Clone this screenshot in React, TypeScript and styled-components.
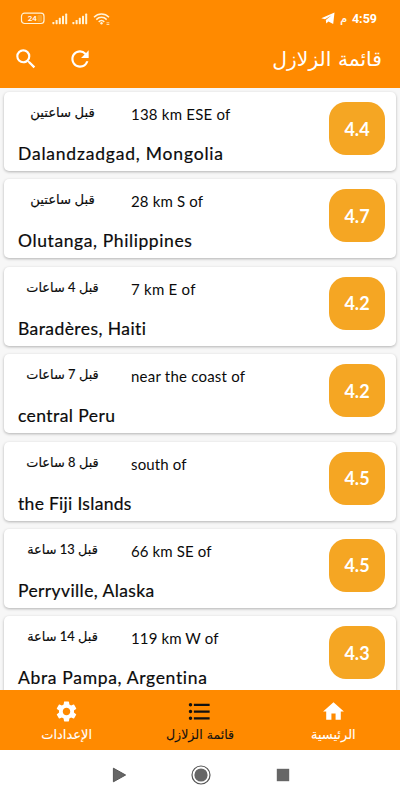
import React from "react";
import styled, { createGlobalStyle } from "styled-components";

const GlobalStyle = createGlobalStyle`
  * { box-sizing: border-box; }
  html, body { margin: 0; padding: 0; background: #fff; }
`;

const latin = `Lato, "Noto Sans", sans-serif`;
const arabic = `Lato, "DejaVu Sans", sans-serif`;

const Screen = styled.div`
  width: 400px;
  height: 800px;
  overflow: hidden;
  display: flex;
  flex-direction: column;
  background: #f7f7f7;
  color: #0b0b0b;
`;

const Header = styled.header`
  height: 88px;
  flex: none;
  background: #ff8a00;
  color: #fff;
  display: flex;
  flex-direction: column;
`;

const StatusBar = styled.div`
  height: 36px;
  padding: 1px 23px 0 20px;
  display: flex;
  align-items: center;
  justify-content: space-between;
`;

const StatusGroup = styled.div<{ $gap: number }>`
  display: flex;
  align-items: center;
  gap: ${(p) => p.$gap}px;
`;

const Clock = styled.span`
  font: 700 12.5px/16px Roboto, "DejaVu Sans", sans-serif;
`;

const Meridiem = styled.span`
  font: 400 11px/16px "DejaVu Sans", sans-serif;
  -webkit-text-stroke: 0.2px #fff;
`;

const AppBar = styled.div`
  height: 46px;
  padding: 0 18px 0 13px;
  display: flex;
  align-items: center;
  justify-content: space-between;
`;

const Actions = styled.div`
  display: flex;
  gap: 28px;
`;

const Title = styled.h1`
  margin: 0;
  font: 400 20.3px/28px "DejaVu Sans", sans-serif;
  white-space: nowrap;
`;

const List = styled.main`
  height: 602px;
  flex: none;
  overflow: hidden;
  padding: 4px 4px 0;
  display: flex;
  flex-direction: column;
  gap: 8.4px;
`;

const Card = styled.article`
  height: 79px;
  flex: none;
  border-radius: 5px;
  background: #fff;
  box-shadow: 0 1px 3px rgba(0, 0, 0, 0.28);
  padding: 10px 11px 0 14px;
  display: flex;
  justify-content: space-between;
`;

const Details = styled.div`
  display: flex;
  flex-direction: column;
`;

const TopLine = styled.div`
  display: grid;
  grid-template-columns: 89px 1fr;
  column-gap: 24px;
  height: 38px;
`;

const Time = styled.div<{ $size: number }>`
  font: 400 ${(p) => p.$size}px/21px ${arabic};
  -webkit-text-stroke: 0.15px #0b0b0b;
  text-align: center;
  white-space: nowrap;
`;

const Distance = styled.div<{ $spacing: number }>`
  font: 400 15px/25px ${latin};
  letter-spacing: ${(p) => p.$spacing}px;
  white-space: nowrap;
`;

const Place = styled.div<{ $spacing: number }>`
  font: 400 17.5px/28px ${latin};
  letter-spacing: ${(p) => p.$spacing}px;
  -webkit-text-stroke: 0.2px #0b0b0b;
  white-space: nowrap;
`;

const Magnitude = styled.div`
  width: 56px;
  height: 53px;
  flex: none;
  border-radius: 17px;
  background: #f5a623;
  color: #fff;
  display: grid;
  place-items: center;
  font: 700 18px/24px ${latin};
`;

const BottomNav = styled.nav`
  height: 60px;
  flex: none;
  background: #ff8a00;
  display: grid;
  grid-template-columns: repeat(3, 1fr);
`;

const NavItem = styled.div<{ $active?: boolean }>`
  color: ${(p) => (p.$active ? "#111" : "#fff")};
  display: flex;
  flex-direction: column;
  align-items: center;
  padding-top: 9px;
  gap: 1px;
`;

const NavIcon = styled.span`
  height: 24px;
  display: flex;
  align-items: center;
`;

const NavLabel = styled.span<{ $size: number }>`
  font: 400 ${(p) => p.$size}px/22px "DejaVu Sans", sans-serif;
  -webkit-text-stroke: 0.1px currentColor;
  white-space: nowrap;
`;

const SystemNav = styled.div`
  height: 50px;
  flex: none;
  padding-left: 2px;
  background: #fff;
  display: flex;
  align-items: center;
  justify-content: center;
  gap: 65px;
`;

const Battery = () => (
  <svg width="27" height="13" viewBox="0 0 27 13">
    <rect x="1.5" y="1.2" width="22.5" height="10.3" rx="3" fill="none" stroke="#fff3d8" strokeWidth="1.2" />
    <rect x="17.5" y="3" width="4.5" height="6.7" rx="1" fill="#fba22a" />
    <text x="12.2" y="9" textAnchor="middle" fontFamily="Roboto, sans-serif" fontSize="8" fontWeight="500" fill="#fff">24</text>
  </svg>
);

const Signal = () => (
  <svg width="16" height="12" viewBox="0 0 16 12">
    {[0, 1, 2, 3, 4].map((i) => (
      <rect key={i} x={0.4 + i * 3.2} y={9 - i * 2.1} width="2" height={2.2 + i * 2.1} rx="0.6" fill="#fff3d8" />
    ))}
  </svg>
);

const Wifi = () => (
  <svg width="18" height="14" viewBox="0 0 18 14" fill="none" stroke="#fff3d8" strokeWidth="1.5">
    <path d="M1 5.2C5.3.9 11.7.9 16 5.2M3.3 7.6c3-3 7.4-3 10.4 0M5.7 9.9c1.7-1.6 3.9-1.6 5.6 0" />
    <circle cx="8.5" cy="11.3" r="1.2" fill="#fff3d8" stroke="none" />
    <path d="M13.5 10.8h2.8m-2.8 1.7h2.8" strokeWidth=".8" />
  </svg>
);

const Telegram = () => (
  <svg width="14" height="13" viewBox="0 0 14 13">
    <path d="M.3 6.2 13.5.6 12.2 12 7.4 9.4 5.3 11.6 4.8 8.1 10.6 3.2 4 7.2Z" fill="#fff" />
  </svg>
);

type IconProps = { size: number; d: string };
const Icon = ({ size, d }: IconProps) => (
  <svg width={size} height={size} viewBox="0 0 24 24" fill="currentColor">
    <path d={d} />
  </svg>
);

const searchPath =
  "M15.5 14h-.79l-.28-.27A6.471 6.471 0 0 0 16 9.5 6.5 6.5 0 1 0 9.5 16c1.61 0 3.09-.59 4.23-1.57l.27.28v.79l5 4.99L20.49 19l-4.99-5zm-6 0C7.01 14 5 11.99 5 9.5S7.01 5 9.5 5 14 7.01 14 9.5 11.99 14 9.5 14z";
const refreshPath =
  "M17.65 6.35A7.958 7.958 0 0 0 12 4c-4.42 0-7.99 3.58-7.99 8s3.57 8 7.99 8c3.73 0 6.84-2.55 7.73-6h-2.08A5.99 5.99 0 0 1 12 18c-3.31 0-6-2.69-6-6s2.69-6 6-6c1.66 0 3.14.69 4.22 1.78L13 11h7V4l-2.35 2.35z";
const homePath = "M10 20v-6h4v6h5v-8h3L12 3 2 12h3v8z";
const listPath =
  "M4 10.5c-.83 0-1.5.67-1.5 1.5s.67 1.5 1.5 1.5 1.5-.67 1.5-1.5-.67-1.5-1.5-1.5zm0-6c-.83 0-1.5.67-1.5 1.5S3.17 7.5 4 7.5 5.5 6.83 5.5 6 4.83 4.5 4 4.5zm0 12c-.83 0-1.5.68-1.5 1.5s.68 1.5 1.5 1.5 1.5-.68 1.5-1.5-.67-1.5-1.5-1.5zM7 19h14v-2H7v2zm0-6h14v-2H7v2zm0-8v2h14V5H7z";
const settingsPath =
  "M19.14 12.94c.04-.3.06-.61.06-.94 0-.32-.02-.64-.07-.94l2.03-1.58a.49.49 0 0 0 .12-.61l-1.92-3.32a.488.488 0 0 0-.59-.22l-2.39.96c-.5-.38-1.03-.7-1.62-.94l-.36-2.54a.484.484 0 0 0-.48-.41h-3.84c-.24 0-.43.17-.47.41l-.36 2.54c-.59.24-1.13.57-1.62.94l-2.39-.96c-.22-.08-.47 0-.59.22L2.74 8.87c-.12.21-.08.47.12.61l2.03 1.58c-.05.3-.09.63-.09.94s.02.64.07.94l-2.03 1.58a.49.49 0 0 0-.12.61l1.92 3.32c.12.22.37.29.59.22l2.39-.96c.5.38 1.03.7 1.62.94l.36 2.54c.05.24.24.41.48.41h3.84c.24 0 .44-.17.47-.41l.36-2.54c.59-.24 1.13-.56 1.62-.94l2.39.96c.22.08.47 0 .59-.22l1.92-3.32c.12-.22.07-.47-.12-.61l-2.01-1.58zM12 15.6c-1.98 0-3.6-1.62-3.6-3.6s1.62-3.6 3.6-3.6 3.6 1.62 3.6 3.6-1.62 3.6-3.6 3.6z";

const quakes = [
  { time: "قبل ساعتين", ts: 13.2, distance: "138 km ESE of", ds: 0.22, place: "Dalandzadgad, Mongolia", ps: 0.8, mag: "4.4" },
  { time: "قبل ساعتين", ts: 13.2, distance: "28 km S of", ds: 0.15, place: "Olutanga, Philippines", ps: 0.6, mag: "4.7" },
  { time: "قبل 4 ساعات", ts: 12.9, distance: "7 km E of", ds: 0.25, place: "Baradères, Haiti", ps: 0.42, mag: "4.2" },
  { time: "قبل 7 ساعات", ts: 12.9, distance: "near the coast of", ds: 0.22, place: "central Peru", ps: 0.42, mag: "4.2" },
  { time: "قبل 8 ساعات", ts: 12.9, distance: "south of", ds: 0.15, place: "the Fiji Islands", ps: 0.3, mag: "4.5" },
  { time: "قبل 13 ساعة", ts: 12.9, distance: "66 km SE of", ds: 0.12, place: "Perryville, Alaska", ps: 0.4, mag: "4.5" },
  { time: "قبل 14 ساعة", ts: 12.9, distance: "119 km W of", ds: 0.12, place: "Abra Pampa, Argentina", ps: 0.67, mag: "4.3" },
];

export default function App() {
  return (
    <Screen>
      <GlobalStyle />
      <Header>
        <StatusBar>
          <StatusGroup $gap={4.5}>
            <Battery />
            <Signal />
            <Signal />
            <Wifi />
          </StatusGroup>
          <StatusGroup $gap={5}>
            <Telegram />
            <Meridiem>م</Meridiem>
            <Clock>4:59</Clock>
          </StatusGroup>
        </StatusBar>
        <AppBar>
          <Actions>
            <Icon size={26} d={searchPath} />
            <Icon size={26} d={refreshPath} />
          </Actions>
          <Title dir="rtl">قائمة الزلازل</Title>
        </AppBar>
      </Header>
      <List>
        {quakes.map((q) => (
          <Card key={q.place}>
            <Details>
              <TopLine>
                <Time dir="rtl" $size={q.ts}>{q.time}</Time>
                <Distance $spacing={q.ds}>{q.distance}</Distance>
              </TopLine>
              <Place $spacing={q.ps}>{q.place}</Place>
            </Details>
            <Magnitude>{q.mag}</Magnitude>
          </Card>
        ))}
      </List>
      <BottomNav>
        <NavItem>
          <NavIcon><Icon size={25} d={settingsPath} /></NavIcon>
          <NavLabel $size={13} dir="rtl">الإعدادات</NavLabel>
        </NavItem>
        <NavItem $active>
          <NavIcon><Icon size={27} d={listPath} /></NavIcon>
          <NavLabel $size={12.6} dir="rtl">قائمة الزلازل</NavLabel>
        </NavItem>
        <NavItem>
          <NavIcon><Icon size={25} d={homePath} /></NavIcon>
          <NavLabel $size={13} dir="rtl">الرئيسية</NavLabel>
        </NavItem>
      </BottomNav>
      <SystemNav>
        <svg width="14" height="16" viewBox="0 0 14 16">
          <path d="M1.4 1.2 13.6 8 1.4 14.8Z" fill="#666" stroke="#555" strokeWidth="1" />
        </svg>
        <svg width="20" height="20" viewBox="0 0 20 20">
          <circle cx="10" cy="10" r="9" fill="none" stroke="#555" strokeWidth="1.2" />
          <circle cx="10" cy="10" r="6.6" fill="#666" />
        </svg>
        <svg width="14" height="14" viewBox="0 0 14 14">
          <rect x="0.8" y="0.8" width="12.4" height="12.4" fill="#666" />
        </svg>
      </SystemNav>
    </Screen>
  );
}
